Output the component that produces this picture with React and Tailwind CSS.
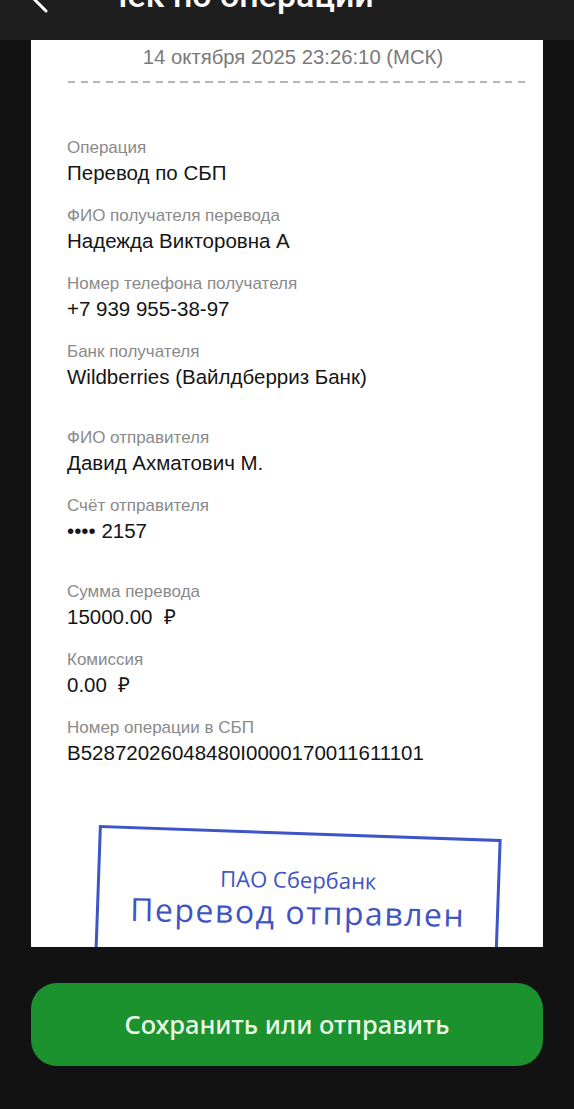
const fields = [
  { label: 'Операция', value: 'Перевод по СБП' },
  { label: 'ФИО получателя перевода', value: 'Надежда Викторовна А' },
  { label: 'Номер телефона получателя', value: '+7 939 955-38-97' },
  { label: 'Банк получателя', value: 'Wildberries (Вайлдберриз Банк)', gapAfter: true },
  { label: 'ФИО отправителя', value: 'Давид Ахматович М.' },
  { label: 'Счёт отправителя', value: '•••• 2157', gapAfter: true },
  { label: 'Сумма перевода', value: '15000.00  ₽' },
  { label: 'Комиссия', value: '0.00  ₽' },
  { label: 'Номер операции в СБП', value: 'B52872026048480I0000170011611101' },
];

const Field = ({ label, value, gapAfter }) => (
  <div className={gapAfter ? 'mb-[38px]' : 'mb-[20px]'}>
    <div className="text-[17px] leading-[20px] text-[#8a8a8a]">{label}</div>
    <div className="whitespace-pre pt-[2px] text-[20.5px] leading-[26px] text-[#151515]">{value}</div>
  </div>
);

const App = () => {
  return (
    <main className="relative h-[1109px] w-[574px] overflow-hidden bg-[#121212] font-['Liberation_Sans',Arial,sans-serif]">
      <header className="relative h-[40px] overflow-hidden bg-[#1e1e1e]">
        <svg className="absolute left-[28px] top-[-15px]" width="24" height="28" viewBox="0 0 24 28" fill="none">
          <path d="M18 2 L6 14 L18 26" stroke="#ffffff" strokeWidth="3" strokeLinecap="round" strokeLinejoin="round" />
        </svg>
        <div className="ml-[104px] mt-[-21px] font-['Roboto',sans-serif] text-[34px] leading-[33px] font-medium text-white">
          Чек по операции
        </div>
      </header>

      <section className="mx-[31px] h-[907px] overflow-hidden bg-white">
        <div className="pl-[12px] pt-[6px] text-center text-[20.3px] leading-[22px] text-[#7a7a7a]">
          14 октября 2025 23:26:10 (МСК)
        </div>
        <div className="ml-[37px] mr-[17px] mt-[13px] h-[2px] bg-[repeating-linear-gradient(to_right,#b5b5b5_0_7px,transparent_7px_12.5px)]" />

        <div className="px-[36px] pt-[55px]">
          {fields.map(field => (
            <Field key={field.label} {...field} />
          ))}
        </div>

        <div className="ml-[65px] mt-[66px] h-[160px] w-[403px] rotate-[2deg] border-[3px] border-[#3d55c8] pt-[32px] text-center font-['Open_Sans',sans-serif] text-[#3e54c2]">
          <div className="rotate-[-1deg]">
            <div className="text-[22px] leading-[24px]">ПАО Сбербанк</div>
            <div className="mt-[2px] text-[32px] leading-[38px] tracking-[1.5px]">Перевод отправлен</div>
          </div>
        </div>
      </section>

      <div className="px-[31px] pt-[36px]">
        <button className="flex h-[83px] w-full items-center justify-center rounded-[26px] bg-[#1b922e] font-['Noto_Sans',sans-serif] text-[25.5px] font-medium text-[#e9f9e6]">
          Сохранить или отправить
        </button>
      </div>
    </main>
  );
};

export default App;
